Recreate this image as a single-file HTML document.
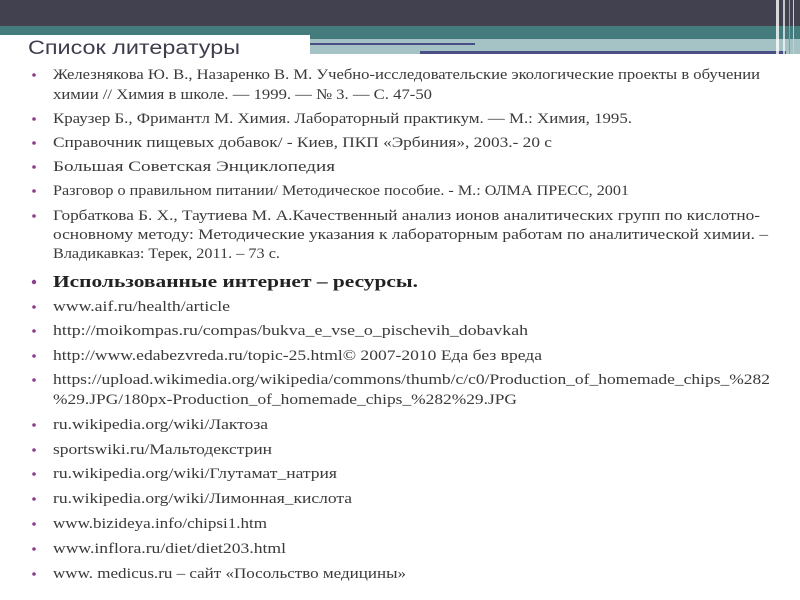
<!DOCTYPE html>
<html><head><meta charset="utf-8"><style>
html,body{margin:0;padding:0;background:#fff;width:800px;height:600px;overflow:hidden}
svg{display:block}
.t{font-family:"Liberation Serif",serif;font-size:15px;fill:#3a3a3a}
</style></head><body>
<svg width="800" height="600" xmlns="http://www.w3.org/2000/svg">
<rect x="0" y="0" width="800" height="27" fill="#414150"/>
<rect x="0" y="26" width="800" height="13" fill="#447c7e"/>
<rect x="0" y="35" width="310" height="5" fill="#fff"/>
<rect x="310" y="39" width="490" height="15" fill="#a5c3c5"/>
<rect x="310" y="43" width="165" height="2" fill="#4a4f86"/>
<rect x="420" y="51" width="366" height="3" fill="#4a4f86"/>
<rect x="776" y="0" width="3" height="54" fill="#fff" opacity="0.8"/>
<rect x="783" y="0" width="2" height="54" fill="#fff" opacity="0.7"/>
<rect x="789" y="0" width="1" height="54" fill="#999"/>
<rect x="793" y="0" width="1" height="54" fill="#ccc"/>
<text x="28" y="54" font-family="'Liberation Sans',sans-serif" font-size="19" fill="#3d3d4d" textLength="212" lengthAdjust="spacingAndGlyphs">Список литературы</text>
<g fill="#8b3f8b">
<circle cx="34" cy="75" r="1.8"/><circle cx="34" cy="119" r="1.8"/><circle cx="34" cy="143" r="1.8"/><circle cx="34" cy="167" r="1.8"/><circle cx="34" cy="191" r="1.8"/><circle cx="34" cy="216" r="1.8"/><circle cx="34" cy="282" r="2.2"/><circle cx="34" cy="307" r="1.8"/><circle cx="34" cy="331" r="1.8"/><circle cx="34" cy="356" r="1.8"/><circle cx="34" cy="380" r="1.8"/><circle cx="34" cy="425" r="1.8"/><circle cx="34" cy="450" r="1.8"/><circle cx="34" cy="474" r="1.8"/><circle cx="34" cy="499" r="1.8"/><circle cx="34" cy="524" r="1.8"/><circle cx="34" cy="549" r="1.8"/><circle cx="34" cy="574" r="1.8"/>
</g>
<g class="t">
<text x="53" y="79" textLength="707" lengthAdjust="spacingAndGlyphs">Железнякова Ю. В., Назаренко В. М. Учебно-исследовательские экологические проекты в обучении</text>
<text x="53" y="99" textLength="379" lengthAdjust="spacingAndGlyphs">химии // Химия в школе. — 1999. — № 3. — С. 47-50</text>
<text x="53" y="123" textLength="579" lengthAdjust="spacingAndGlyphs">Краузер Б., Фримантл М. Химия. Лабораторный практикум. — М.: Химия, 1995.</text>
<text x="53" y="147" textLength="499" lengthAdjust="spacingAndGlyphs">Справочник пищевых добавок/ - Киев, ПКП «Эрбиния», 2003.- 20 с</text>
<text x="53" y="171" textLength="282" lengthAdjust="spacingAndGlyphs">Большая Советская Энциклопедия</text>
<text x="53" y="195" textLength="576" lengthAdjust="spacingAndGlyphs">Разговор о правильном питании/ Методическое пособие. - М.: ОЛМА ПРЕСС, 2001</text>
<text x="53" y="220" textLength="707" lengthAdjust="spacingAndGlyphs">Горбаткова Б. Х., Таутиева М. А.Качественный анализ ионов аналитических групп по кислотно-</text>
<text x="53" y="239" textLength="715" lengthAdjust="spacingAndGlyphs">основному методу: Методические указания к лабораторным работам по аналитической химии. –</text>
<text x="53" y="258" textLength="227" lengthAdjust="spacingAndGlyphs">Владикавказ: Терек, 2011. – 73 с.</text>
<text x="53" y="287" font-weight="bold" font-size="17" fill="#222" textLength="365" lengthAdjust="spacingAndGlyphs">Использованные интернет – ресурсы.</text>
<text x="53" y="311" textLength="177" lengthAdjust="spacingAndGlyphs">www.aif.ru/health/article</text>
<text x="53" y="335" textLength="475" lengthAdjust="spacingAndGlyphs">http://moikompas.ru/compas/bukva_e_vse_o_pischevih_dobavkah</text>
<text x="53" y="360" textLength="489" lengthAdjust="spacingAndGlyphs">http://www.edabezvreda.ru/topic-25.html© 2007-2010 Еда без вреда</text>
<text x="53" y="384" textLength="717" lengthAdjust="spacingAndGlyphs">https://upload.wikimedia.org/wikipedia/commons/thumb/c/c0/Production_of_homemade_chips_%282</text>
<text x="53" y="404" textLength="464" lengthAdjust="spacingAndGlyphs">%29.JPG/180px-Production_of_homemade_chips_%282%29.JPG</text>
<text x="53" y="429" textLength="215" lengthAdjust="spacingAndGlyphs">ru.wikipedia.org/wiki/Лактоза</text>
<text x="53" y="454" textLength="219" lengthAdjust="spacingAndGlyphs">sportswiki.ru/Мальтодекстрин</text>
<text x="53" y="478" textLength="284" lengthAdjust="spacingAndGlyphs">ru.wikipedia.org/wiki/Глутамат_натрия</text>
<text x="53" y="503" textLength="299" lengthAdjust="spacingAndGlyphs">ru.wikipedia.org/wiki/Лимонная_кислота</text>
<text x="53" y="528" textLength="214" lengthAdjust="spacingAndGlyphs">www.bizideya.info/chipsi1.htm</text>
<text x="53" y="553" textLength="233" lengthAdjust="spacingAndGlyphs">www.inflora.ru/diet/diet203.html</text>
<text x="53" y="578" textLength="353" lengthAdjust="spacingAndGlyphs">www. medicus.ru – сайт «Посольство медицины»</text>
</g>
</svg>
</body></html>
